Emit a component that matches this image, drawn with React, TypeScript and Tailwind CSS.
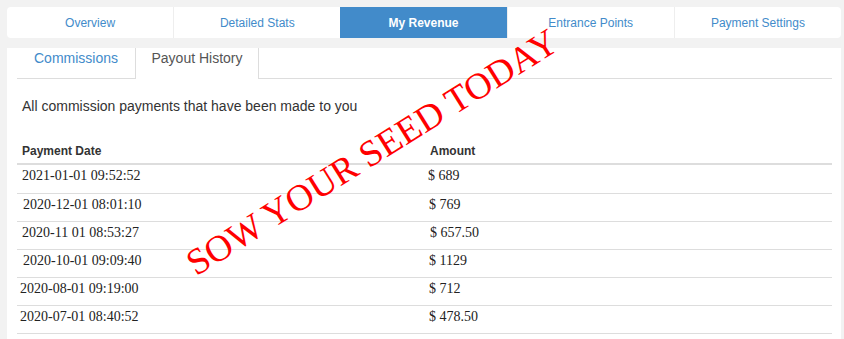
const navTabs = ["Overview", "Detailed Stats", "My Revenue", "Entrance Points", "Payment Settings"];

// x offsets copied from the screenshot (the source data has uneven leading space)
const payouts = [
  { date: "2021-01-01 09:52:52", amount: "$ 689", dPad: "pl-[5px]", aPad: "pl-[3px]" },
  { date: "2020-12-01 08:01:10", amount: "$ 769", dPad: "pl-[6px]", aPad: "pl-[4px]" },
  { date: "2020-11 01 08:53:27", amount: "$ 657.50", dPad: "pl-[5px]", aPad: "pl-[5px]" },
  { date: "2020-10-01 09:09:40", amount: "$ 1129", dPad: "pl-[6px]", aPad: "pl-[4px]" },
  { date: "2020-08-01 09:19:00", amount: "$ 712", dPad: "pl-[3px]", aPad: "pl-[4px]" },
  { date: "2020-07-01 08:40:52", amount: "$ 478.50", dPad: "pl-[3px]", aPad: "pl-[4px]" },
];

export default function App() {
  return (
    <div className="relative w-[844px] h-[339px] overflow-hidden bg-[#f2f2f2] pt-[7px] px-[7px] pr-[3px] font-['Liberation_Sans',Arial,sans-serif]">
      {/* ── Top nav ── */}
      <div className="flex h-[31px] bg-white rounded-[4px] overflow-hidden">
        {navTabs.map((t, i) => (
          <div
            key={t}
            className={
              t === "My Revenue"
                ? "flex-1 flex items-center justify-center text-[12px] font-bold text-white bg-[#428bca]"
                : `flex-1 flex items-center justify-center text-[12px] text-[#428bca] ${i > 0 ? "border-l border-[#eeeeee]" : ""}`
            }
          >
            {t}
          </div>
        ))}
      </div>

      {/* ── Panel ── */}
      <div className="mt-[10px] bg-white h-[300px] pl-[10px] pr-[9px]">
        {/* sub tabs */}
        <div className="flex h-[31px] border-b border-[#dddddd]">
          <div className="w-[118px] flex justify-center pt-[1px] text-[14px] leading-[18px] text-[#428bca]">
            Commissions
          </div>
          <div className="w-[124px] flex justify-center pt-[1px] text-[14px] leading-[18px] text-[#555555] bg-white border-x border-[#dddddd] -mb-px">
            Payout History
          </div>
        </div>

        <p className="pt-[17px] pl-[5px] text-[14px] leading-[20px] text-[#333333]">
          All commission payments that have been made to you
        </p>

        {/* table */}
        <div className="mt-[26px]">
          <div className="flex h-[23px] border-b-2 border-[#dddddd] text-[12px] font-bold text-[#333333]">
            <div className="w-[408px] pl-[5px]">Payment Date</div>
            <div className="pl-[5px]">Amount</div>
          </div>
          {payouts.map((p, i) => (
            <div
              key={p.date}
              className={`flex ${i === 0 ? "h-[29px]" : "h-[28px]"} border-b border-[#dddddd] pt-[2px] text-[14px] leading-[18px] text-[#222222] font-['Liberation_Serif','Times_New_Roman',serif]`}
            >
              <div className={`w-[408px] ${p.dPad}`}>{p.date}</div>
              <div className={p.aPad}>{p.amount}</div>
            </div>
          ))}
        </div>
      </div>

      {/* ── Watermark ── */}
      <div className="absolute left-[372px] top-[152px] -translate-x-1/2 -translate-y-1/2 -rotate-[32deg] whitespace-nowrap text-[37px] leading-none text-[#ff0000] font-['Liberation_Serif','Times_New_Roman',serif] pointer-events-none">
        SOW YOUR SEED TODAY
      </div>
    </div>
  );
}
